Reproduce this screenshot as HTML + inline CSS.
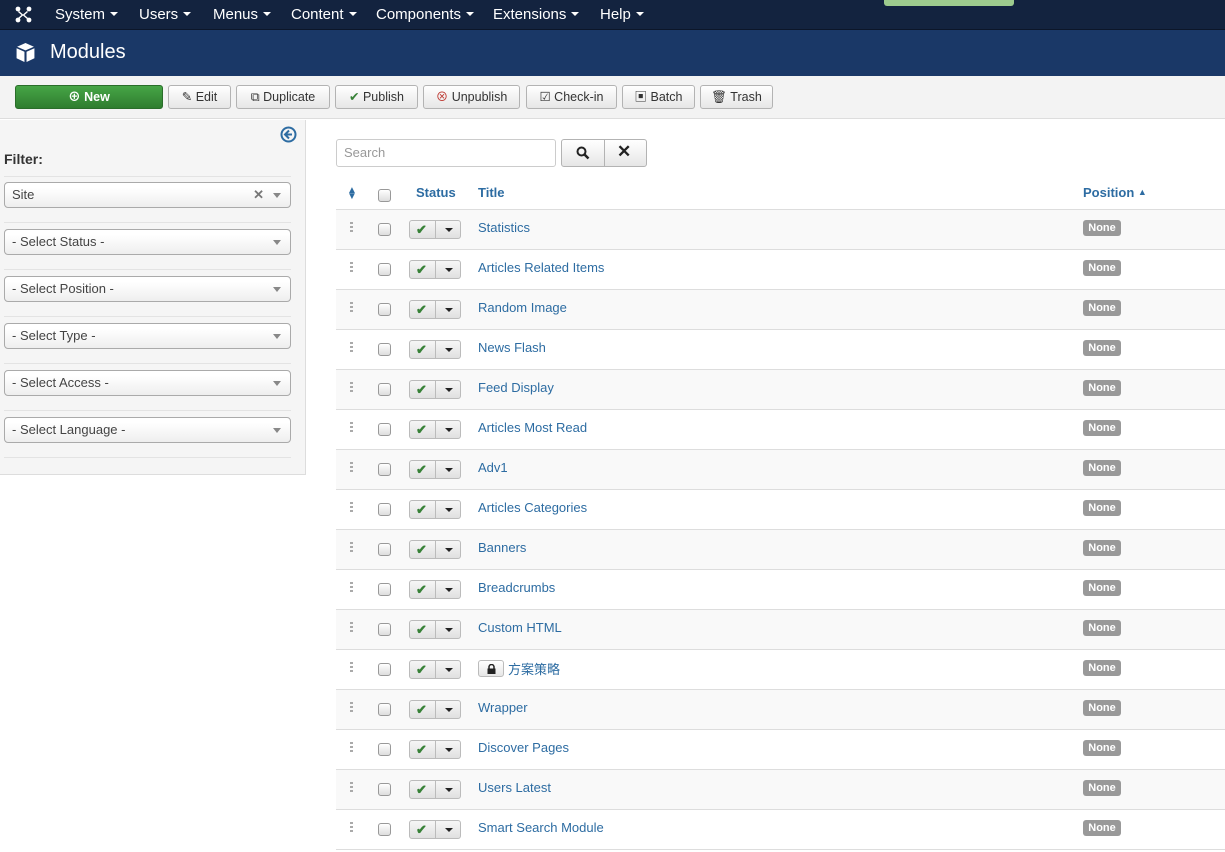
<!DOCTYPE html>
<html><head><meta charset="utf-8"><style>
*{box-sizing:border-box;margin:0;padding:0}
body{width:1225px;height:852px;overflow:hidden;font-family:"Liberation Sans","Noto Sans CJK SC",sans-serif;font-size:13px;color:#333;background:#fff;position:relative}
.nav{position:absolute;left:0;top:0;width:1225px;height:30px;background:#13233f;border-bottom:1px solid #0c1629}
.nav span{position:absolute;top:6px;color:#fff;font-size:15px}
.nav span i{display:inline-block;border-left:4px solid transparent;border-right:4px solid transparent;border-top:4px solid #fff;margin-left:5px;vertical-align:3px}
.hdr{position:absolute;left:0;top:30px;width:1225px;height:46px;background:#1a3867}
.tb{position:absolute;left:0;top:76px;width:1225px;height:43px;background:#f3f3f3;border-bottom:1px solid #ddd}
.btn{position:absolute;top:9px;height:24px;border:1px solid #b3b3b3;border-radius:3px;background:linear-gradient(#fff,#e6e6e6);font-size:12.5px;color:#333;line-height:22px;white-space:nowrap;text-align:center}
.side{position:absolute;left:0;top:120px;width:306px;height:355px;background:#f5f5f5;border-right:1px solid #ddd;border-bottom:1px solid #ddd}
.sel{position:absolute;left:4px;width:287px;height:26px;border:1px solid #aaa;border-radius:4px;background:linear-gradient(#fff 20%,#eee);font-size:13px;padding-left:7px;line-height:24px;color:#444}
.sel:after{content:"";position:absolute;right:9px;top:10px;border-left:4px solid transparent;border-right:4px solid transparent;border-top:5px solid #888}
.hr{position:absolute;left:4px;width:287px;border-top:1px solid #e3e3e3}
.row{position:absolute;left:336px;width:889px;height:40px;border-bottom:1px solid #ddd}
.row.o{background:#f9f9f9}
.row .dr{position:absolute;left:14px;top:12px;width:3px;height:11px;background:repeating-linear-gradient(#aaa 0 2px,transparent 2px 4px)}
.cb{position:absolute;width:13px;height:13px;border:1px solid #999;border-radius:3px;background:linear-gradient(#fff,#ddd)}
.sb{position:absolute;left:73px;top:10px;width:52px;height:19px;border:1px solid #bbb;border-radius:3px;background:linear-gradient(#f6f6f6,#e0e0e0)}
.sb:before{content:"";position:absolute;left:25px;top:0;height:17px;border-left:1px solid #bbb}
.sb b{position:absolute;left:6px;top:0;color:#378137;font-size:13px;line-height:17px}
.sb:after{content:"";position:absolute;left:35px;top:7px;border-left:4px solid transparent;border-right:4px solid transparent;border-top:4px solid #222}
.t{position:absolute;left:142px;top:10px;color:#2d6ca2;font-size:13px}
.none{position:absolute;left:747px;top:10px;width:38px;text-align:center;background:#999;color:#fff;font-size:11px;font-weight:bold;border-radius:3px;line-height:16px}
.th{position:absolute;top:185px;color:#2d6ca2;font-weight:bold;font-size:13px}
</style></head><body>
<div class="nav">
<svg style="position:absolute;left:15px;top:6px" width="17" height="17" viewBox="0 0 17 17"><g fill="#fff"><circle cx="3" cy="3" r="2.4"/><circle cx="14" cy="3" r="2.4"/><circle cx="3" cy="14" r="2.4"/><circle cx="14" cy="14" r="2.4"/><path d="M4 5l4 3.5 4-3.5 1 1-3.5 3 3.5 3-1 1-4-3.5-4 3.5-1-1 3.5-3-3.5-3z"/></g></svg>
<span style="left:55px">System<i></i></span><span style="left:139px">Users<i></i></span><span style="left:213px">Menus<i></i></span><span style="left:291px">Content<i></i></span><span style="left:376px">Components<i></i></span><span style="left:493px">Extensions<i></i></span><span style="left:600px">Help<i></i></span>
<div style="position:absolute;left:884px;top:0;width:130px;height:6px;background:#9dcb8e;border-radius:0 0 3px 3px"></div>
</div>
<div class="hdr">
<svg style="position:absolute;left:15px;top:12px" width="21" height="21" viewBox="0 0 20 20"><path fill="#fff" d="M10 1l8 3.5-8 3.5-8-3.5zM1.5 6l7.5 3.3V19L1.5 15.5zM18.5 6L11 9.3V19l7.5-3.5z"/></svg>
<div style="position:absolute;left:50px;top:11px;color:#fff;font-size:20px">Modules</div>
</div>
<div class="tb">
<div class="btn" style="left:15px;width:148px;background:linear-gradient(#46a546,#2f7d2f);border-color:#2a6d2a;color:#fff;font-weight:bold">⊕ New</div>
<div class="btn" style="left:168px;width:63px">✎ Edit</div>
<div class="btn" style="left:236px;width:94px">⧉ Duplicate</div>
<div class="btn" style="left:335px;width:83px"><span style="color:#378137">✔</span> Publish</div>
<div class="btn" style="left:423px;width:97px"><span style="color:#bd362f">⊗</span> Unpublish</div>
<div class="btn" style="left:526px;width:91px">☑ Check-in</div>
<div class="btn" style="left:622px;width:73px">▣ Batch</div>
<div class="btn" style="left:700px;width:73px">🗑 Trash</div>
</div>
<div class="side">
<svg style="position:absolute;left:280px;top:6px" width="17" height="17" viewBox="0 0 17 17"><circle cx="8.5" cy="8.5" r="7" fill="none" stroke="#2d6ca2" stroke-width="2"/><path d="M9 4.5L5 8.5l4 4M5 8.5h7" fill="none" stroke="#2d6ca2" stroke-width="2"/></svg>
<div style="position:absolute;left:4px;top:31px;font-weight:bold;font-size:14px">Filter:</div>
<div class="hr" style="top:56px"></div>
<div class="sel" style="top:62px">Site<span style="position:absolute;right:26px;color:#777;font-weight:bold">✕</span></div>
<div class="hr" style="top:102px"></div>
<div class="sel" style="top:109px">- Select Status -</div>
<div class="hr" style="top:149px"></div>
<div class="sel" style="top:156px">- Select Position -</div>
<div class="hr" style="top:196px"></div>
<div class="sel" style="top:203px">- Select Type -</div>
<div class="hr" style="top:243px"></div>
<div class="sel" style="top:250px">- Select Access -</div>
<div class="hr" style="top:290px"></div>
<div class="sel" style="top:297px">- Select Language -</div>
<div class="hr" style="top:337px"></div>
</div>
<div style="position:absolute;left:336px;top:139px;width:220px;height:28px;border:1px solid #ccc;border-radius:3px;padding-left:7px;line-height:26px;color:#999">Search</div>
<div style="position:absolute;left:561px;top:139px;width:86px;height:28px;border:1px solid #b3b3b3;border-radius:3px;background:linear-gradient(#fff,#e6e6e6)"><div style="position:absolute;left:42px;top:0;height:26px;border-left:1px solid #b3b3b3"></div>
<svg style="position:absolute;left:14px;top:6px" width="14" height="14" viewBox="0 0 14 14"><circle cx="5.5" cy="5.5" r="4" fill="none" stroke="#222" stroke-width="2"/><path d="M8.5 8.5l4 4" stroke="#222" stroke-width="2.5"/></svg>
<span style="position:absolute;left:55px;top:2px;font-size:17px;font-weight:bold;color:#222">✕</span></div>
<div style="position:absolute;left:336px;top:209px;width:889px;border-top:1px solid #ddd"></div>
<div class="th" style="left:347px;font-size:10px;top:185px">▲<br></div>
<div class="th" style="left:347px;font-size:10px;top:191px">▼</div>
<div class="cb" style="left:378px;top:189px"></div>
<div class="th" style="left:416px">Status</div>
<div class="th" style="left:478px">Title</div>
<div class="th" style="left:1083px">Position <span style="font-size:9px;vertical-align:2px">▲</span></div>
<div id="rows"></div>
<script>
var t=["Statistics","Articles Related Items","Random Image","News Flash","Feed Display","Articles Most Read","Adv1","Articles Categories","Banners","Breadcrumbs","Custom HTML","LOCK","Wrapper","Discover Pages","Users Latest","Smart Search Module"];
var h="";t.forEach(function(s,i){var tt=s=="LOCK"?'<span style="position:relative;display:inline-block;width:26px;height:17px;border:1px solid #bbb;border-radius:3px;background:linear-gradient(#fff,#e6e6e6);margin-right:4px;vertical-align:-3px"><svg style="position:absolute;left:8px;top:3px" width="9" height="10" viewBox="0 0 9 10"><path d="M2 4.5V3a2.5 2.5 0 0 1 5 0v1.5" fill="none" stroke="#222" stroke-width="1.5"/><rect x="0.5" y="4.5" width="8" height="5.5" fill="#222"/></svg></span>方案策略':s;
h+='<div class="row'+(i%2==0?' o':'')+'" style="top:'+(210+40*i)+'px"><div class="dr"></div><div class="cb" style="left:42px;top:13px"></div><div class="sb"><b>✔</b></div><div class="t"'+(s=="LOCK"?' style="top:9px"':'')+'>'+tt+'</div><div class="none">None</div></div>'});
document.getElementById("rows").innerHTML=h;
</script>
</body></html>
